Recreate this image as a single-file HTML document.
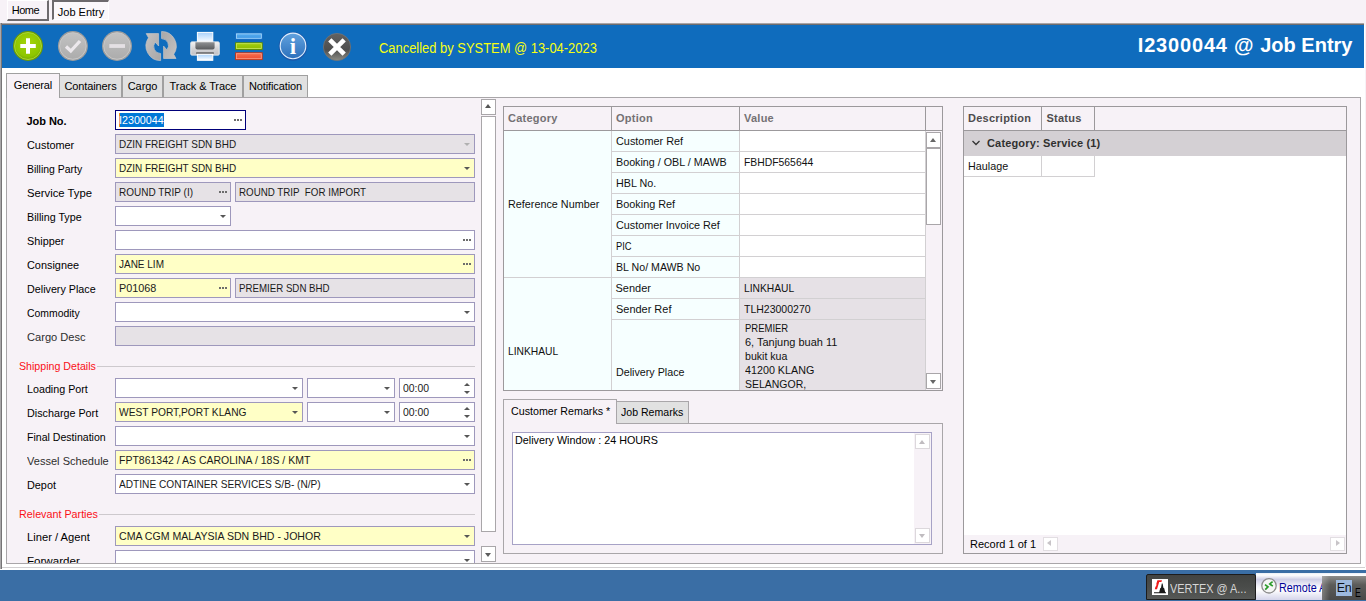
<!DOCTYPE html>
<html>
<head>
<meta charset="utf-8">
<title>Job Entry</title>
<style>
*{box-sizing:border-box;margin:0;padding:0}
html,body{width:1366px;height:601px;overflow:hidden;background:#f7f2f7;font-family:"Liberation Sans",sans-serif;font-size:11px;color:#000}
.a{position:absolute}
#root{position:absolute;left:0;top:0;width:1366px;height:601px;overflow:hidden;background:#f7f2f7}
/* top window tabs */
.wtab{position:absolute;top:0;height:20px;font:11px "Liberation Sans",sans-serif;line-height:19px;text-align:center;color:#000}
/* blue bar */
#bar{position:absolute;left:2px;top:25px;width:1362px;height:43px;background:#0f6cbd}
#status{position:absolute;left:376.7px;top:15.4px;font:14px "Liberation Sans",sans-serif;color:#f6ff12;white-space:pre;transform-origin:0 50%;transform:scaleX(.923)}
#title{position:absolute;right:11.5px;top:8px;font:bold 20px "Liberation Sans",sans-serif;color:#fff;white-space:pre;letter-spacing:0.48px;line-height:24px}
/* main tabs */
.tab{position:absolute;top:75px;height:22px;background:#e1e1e1;border:1px solid #a0a0a0;border-bottom:none;font:11px "Liberation Sans",sans-serif;line-height:21px;text-align:center;letter-spacing:-0.1px;white-space:pre}
.tab.sel{top:73px;height:25px;background:#f7f2f7;line-height:22px;z-index:3}
#panel{position:absolute;left:6px;top:97px;width:1355px;height:467px;border:1px solid #a9a6a9;background:#f7f2f7}
/* form */
.l{position:absolute;left:26.5px;font:11px "Liberation Sans",sans-serif;white-space:pre;line-height:14px;transform-origin:0 50%;transform:scaleX(var(--s,1))}
.i{position:absolute;height:20px;border:1px solid #9e98bc;background:#fff;font:11px "Liberation Sans",sans-serif;line-height:19px;padding-left:2.5px;white-space:pre;overflow:hidden;color:#1a1a1a}
.t{display:inline-block;transform-origin:0 50%;transform:scaleX(var(--s,1));white-space:pre}
.y{background:#ffffc6}
.g{background:#e6e2e6}
.dd:after{content:"";position:absolute;right:4px;top:8px;border:3.5px solid transparent;border-top:3.5px solid #565656;border-bottom:none}
.dd.dis:after{border-top-color:#b0b0b0}
.el:after{content:"";position:absolute;right:3px;top:8px;width:8px;height:2px;background:linear-gradient(90deg,#6c6c6c 0 2px,transparent 2px 3px,#6c6c6c 3px 5px,transparent 5px 6px,#6c6c6c 6px 8px)}
.sp:after{content:"";position:absolute;right:4px;top:3.5px;border:3px solid transparent;border-bottom:3px solid #555;border-top:none}
.sp:before{content:"";position:absolute;right:4px;top:11.5px;border:3px solid transparent;border-top:3px solid #555;border-bottom:none}

/* grids */
.gh{position:absolute;top:107px;height:23px;font:bold 11px "Liberation Sans",sans-serif;letter-spacing:.25px;color:#747174;line-height:23px;padding-left:4px;border-right:1px solid #9c999c;white-space:pre}
.c{position:absolute;font:11px "Liberation Sans",sans-serif;line-height:20px;padding-left:3.5px;white-space:pre;border-right:1px solid #d2d0d2;border-bottom:1px solid #d2d0d2;background:#f6ffff;color:#111}
.c.w{background:#fff}
.c.gr{background:#e6e1e6}
.sb{position:absolute;border:1px solid #a9a6a9;background:#fff}
.sec{position:absolute;left:18.9px;font:11px "Liberation Sans",sans-serif;color:#fa1018;white-space:pre;line-height:14px;transform-origin:0 50%;transform:scaleX(var(--s,1))}
.hr{position:absolute;height:1px;background:#cdc9cd}
</style>
</head>
<body>
<div id="root">
<!-- window outer left border -->
<div class="a" style="left:0;top:23px;width:2px;height:546px;background:linear-gradient(90deg,#aaa8aa 0 1px,#767476 1px);z-index:5"></div>
<div class="a" style="left:0;top:23px;width:1364px;height:2px;background:linear-gradient(#a8a4a6 0 1px,#6e6c6e 1px)"></div>
<!-- window tabs -->
<div class="wtab" style="left:7px;width:42px;height:21px;border:1px solid #fff;border-right:2px solid #6d6a6d;border-bottom:2px solid #6d6a6d;background:#f7f2f7;letter-spacing:-0.5px;text-align:left;padding-left:3.7px">Home</div>
<div class="wtab" style="left:52px;width:57px;border-left:2px solid #6d6a6d;border-top:2px solid #6d6a6d;border-right:1px solid #fff;border-bottom:1px solid #fff;background:#fbf8fb;line-height:16px;padding-top:2px">Job Entry</div>

<div class="a" style="left:2px;top:25px;width:1363px;height:542px;background:#fff"></div>
<div id="bar">
  <div id="status">Cancelled by SYSTEM @ 13-04-2023</div>
  <div id="title"><span style="letter-spacing:.83px">I2300044</span><span style="letter-spacing:.6px"> @ </span><span style="letter-spacing:0">Job Entry</span></div>
</div>


<!-- toolbar icons -->
<svg class="a" style="left:10px;top:28px" width="350" height="38" viewBox="10 28 350 38">
<defs>
<radialGradient id="gg" cx="50%" cy="40%" r="60%"><stop offset="0" stop-color="#a4d40a"/><stop offset="0.8" stop-color="#8ec600"/><stop offset="1" stop-color="#78ac00"/></radialGradient>
<linearGradient id="gy" x1="0" y1="0" x2="0" y2="1"><stop offset="0" stop-color="#c2c2c2"/><stop offset="1" stop-color="#acacac"/></linearGradient>
<linearGradient id="gr" x1="0" y1="0" x2="1" y2="1"><stop offset="0" stop-color="#c4c2c2"/><stop offset="1" stop-color="#a8a6a6"/></linearGradient>
<linearGradient id="gb" x1="0" y1="0" x2="0" y2="1"><stop offset="0" stop-color="#62a2de"/><stop offset="1" stop-color="#2c70bc"/></linearGradient>
<linearGradient id="gd" x1="0" y1="0" x2="0" y2="1"><stop offset="0" stop-color="#626262"/><stop offset="0.6" stop-color="#4e4e4e"/><stop offset="1" stop-color="#8c8c84"/></linearGradient>
<linearGradient id="gp" x1="0" y1="0" x2="0" y2="1"><stop offset="0" stop-color="#a8d2fc"/><stop offset="1" stop-color="#ffffff"/></linearGradient>
<linearGradient id="gpr" x1="0" y1="0" x2="0" y2="1"><stop offset="0" stop-color="#f4f4f4"/><stop offset="0.5" stop-color="#d4d4d6"/><stop offset="1" stop-color="#c0c0c4"/></linearGradient>
<linearGradient id="gsl" x1="0" y1="0" x2="0" y2="1"><stop offset="0" stop-color="#8e9092"/><stop offset="1" stop-color="#5a5c5e"/></linearGradient>
<linearGradient id="b1" x1="0" y1="0" x2="0" y2="1"><stop offset="0" stop-color="#5cb0f0"/><stop offset="1" stop-color="#3a96e4"/></linearGradient>
<linearGradient id="b2" x1="0" y1="0" x2="0" y2="1"><stop offset="0" stop-color="#a4d010"/><stop offset="1" stop-color="#8cbc00"/></linearGradient>
<linearGradient id="b3" x1="0" y1="0" x2="0" y2="1"><stop offset="0" stop-color="#f87050"/><stop offset="1" stop-color="#ec4c30"/></linearGradient>
</defs>
<!-- add -->
<circle cx="28" cy="46" r="15" fill="#6c9c02"/>
<circle cx="28" cy="46" r="13.5" fill="url(#gg)" stroke="#b0d840" stroke-width="0.9"/>
<path d="M20.3 46 H35.8 M28 38.3 V53.8" stroke="#fff" stroke-width="4"/>
<!-- ok -->
<circle cx="72.9" cy="46" r="15" fill="#9e9e9e"/>
<circle cx="72.9" cy="46" r="13.3" fill="url(#gy)" stroke="#c8c8c8" stroke-width="1"/>
<path d="M66 46.5 L70.8 51 L80 41" stroke="#ece8ec" stroke-width="3.3" fill="none"/>
<!-- minus -->
<circle cx="117" cy="46" r="15" fill="#9e9e9e"/>
<circle cx="117" cy="46" r="13.3" fill="url(#gy)" stroke="#c8c8c8" stroke-width="1"/>
<path d="M109.3 46 H125" stroke="#e4e0e4" stroke-width="3.8"/>
<!-- refresh -->
<g fill="url(#gr)" stroke="#c8c6c6" stroke-width="0.7" stroke-linejoin="round">
<path id="ra" d="M160.6 60.6 A14.6 14.6 0 0 1 148.5 37.8 L146.2 33.6 H158.6 V46 L155.3 42.2 A6.9 6.9 0 0 0 160.6 53.5 Z"/>
<path d="M160.6 60.6 A14.6 14.6 0 0 1 148.5 37.8 L146.2 33.6 H158.6 V46 L155.3 42.2 A6.9 6.9 0 0 0 160.6 53.5 Z" transform="rotate(180 161.1 46.05)"/>
</g>
<!-- printer -->
<rect x="197.4" y="32.4" width="15.4" height="10" fill="url(#gp)" stroke="#fff" stroke-width="1"/>
<rect x="190.8" y="41.9" width="28.4" height="13.2" rx="1" fill="url(#gpr)" stroke="#e8e8e8" stroke-width="1"/>
<path d="M195.4 42.3 H214.6 V47.5 Q214.6 49.4 212.6 49.4 H197.4 Q195.4 49.4 195.4 47.5 Z" fill="url(#gsl)"/>
<rect x="196.2" y="52.2" width="17.6" height="1.8" fill="#6a6a6c"/>
<rect x="197.4" y="54.3" width="15.4" height="6" fill="url(#gp)" stroke="#fff" stroke-width="1"/>
<!-- bars -->
<rect x="235.6" y="33" width="26.6" height="6.2" fill="url(#b1)" stroke="#186cc0" stroke-width="1"/>
<rect x="236.5" y="33.9" width="24.8" height="4.4" fill="none" stroke="#a8d8fa" stroke-width="0.8"/>
<rect x="235.6" y="42.8" width="26.6" height="6.6" fill="url(#b2)" stroke="#5e8c00" stroke-width="1"/>
<rect x="236.5" y="43.7" width="24.8" height="4.8" fill="none" stroke="#cce860" stroke-width="0.8"/>
<rect x="235.6" y="52.8" width="26.6" height="6.8" fill="url(#b3)" stroke="#c23418" stroke-width="1"/>
<rect x="236.5" y="53.7" width="24.8" height="5" fill="none" stroke="#fca088" stroke-width="0.8"/>
<!-- info -->
<circle cx="293" cy="46.4" r="14.3" fill="#1a58aa"/>
<circle cx="293" cy="45.9" r="12.8" fill="url(#gb)" stroke="#e0eefc" stroke-width="1.1"/>
<text x="293" y="54.2" font-family="Liberation Serif, serif" font-weight="bold" font-size="23" fill="#fff" text-anchor="middle">i</text>
<!-- close -->
<circle cx="337" cy="47" r="13.6" fill="url(#gd)" stroke="#747474" stroke-width="0.8"/>
<path d="M329.8 39.8 L344.2 54.2 M344.2 39.8 L329.8 54.2" stroke="#fff" stroke-width="4.6"/>
</svg>

<!-- main tabs -->
<div id="panel"></div>
<div class="tab sel" style="left:6px;width:54px">General</div>
<div class="tab" style="left:59px;width:63px">Containers</div>
<div class="tab" style="left:122px;width:41px">Cargo</div>
<div class="tab" style="left:163px;width:80px">Track &amp; Trace</div>
<div class="tab" style="left:243px;width:65px">Notification</div>


<!-- LEFT FORM -->
<div class="a" id="form" style="left:7px;top:98px;width:474px;height:465px;overflow:hidden">
<div class="a" style="left:-7px;top:-98px;width:500px;height:700px">
<div class="l" style="top:114px;font-weight:bold;letter-spacing:-0.05px">Job No.</div>
<div class="i el" style="left:115px;top:110px;width:131px;border-color:#00007a;"><span style="background:#0078d7;color:#fff;display:inline-block;height:14px;line-height:14px;margin-top:2px;vertical-align:top;box-shadow:inset 1px 0 0 #f08a1c;width:45px;margin-left:.5px;overflow:hidden"><span class="t" style="--s:.975">I2300044</span></span></div>
<div class="l" style="top:138px;--s:0.991">Customer</div>
<div class="i g dd dis" style="left:115px;top:134px;width:360px"><span class="t" style="--s:0.905">DZIN FREIGHT SDN BHD</span></div>
<div class="l" style="top:162px;--s:0.949">Billing Party</div>
<div class="i y dd" style="left:115px;top:158px;width:360px"><span class="t" style="--s:0.905">DZIN FREIGHT SDN BHD</span></div>
<div class="l" style="top:186px;--s:1.026">Service Type</div>
<div class="i g el" style="left:115px;top:182px;width:116px"><span class="t" style="--s:0.908">ROUND TRIP (I)</span></div>
<div class="i g" style="left:235px;top:182px;width:240px"><span class="t" style="--s:0.888">ROUND TRIP  FOR IMPORT</span></div>
<div class="l" style="top:210px;--s:0.975">Billing Type</div>
<div class="i dd" style="left:115px;top:206px;width:116px"></div>
<div class="l" style="top:234px;--s:0.986">Shipper</div>
<div class="i el" style="left:115px;top:230px;width:360px"></div>
<div class="l" style="top:258px;--s:0.99">Consignee</div>
<div class="i y el" style="left:115px;top:254px;width:360px"><span class="t" style="--s:0.908">JANE LIM</span></div>
<div class="l" style="top:282px;--s:0.977">Delivery Place</div>
<div class="i y el" style="left:115px;top:278px;width:116px"><span class="t" style="--s:0.985">P01068</span></div>
<div class="i g" style="left:235px;top:278px;width:240px"><span class="t" style="--s:0.882">PREMIER SDN BHD</span></div>
<div class="l" style="top:306px;--s:0.946">Commodity</div>
<div class="i dd" style="left:115px;top:302px;width:360px"></div>
<div class="l" style="top:330px;--s:1.009;color:#2e2e2e">Cargo Desc</div>
<div class="i g" style="left:115px;top:326px;width:360px"></div>

<div class="sec" style="top:359px;--s:0.967">Shipping Details</div>
<div class="hr" style="left:97px;top:366px;width:378px"></div>
<div class="l" style="top:382px;--s:0.975">Loading Port</div>
<div class="i dd" style="left:115px;top:378px;width:188px"></div>
<div class="i dd" style="left:307px;top:378px;width:88px"></div>
<div class="i sp" style="left:399px;top:378px;width:76px"><span class="t" style="--s:0.948">00:00</span></div>
<div class="l" style="top:406px;--s:0.978">Discharge Port</div>
<div class="i y dd" style="left:115px;top:402px;width:188px"><span class="t" style="--s:0.928">WEST PORT,PORT KLANG</span></div>
<div class="i dd" style="left:307px;top:402px;width:88px"></div>
<div class="i sp" style="left:399px;top:402px;width:76px"><span class="t" style="--s:0.948">00:00</span></div>
<div class="l" style="top:430px;--s:0.96">Final Destination</div>
<div class="i dd" style="left:115px;top:426px;width:360px"></div>
<div class="l" style="top:454px;--s:1.005;color:#2e2e2e">Vessel Schedule</div>
<div class="i y el" style="left:115px;top:450px;width:360px"><span class="t" style="--s:0.954">FPT861342 / AS CAROLINA / 18S / KMT</span></div>
<div class="l" style="top:478px;--s:0.986">Depot</div>
<div class="i dd" style="left:115px;top:474px;width:360px"><span class="t" style="--s:0.921">ADTINE CONTAINER SERVICES S/B- (N/P)</span></div>

<div class="sec" style="top:507px;--s:0.977">Relevant Parties</div>
<div class="hr" style="left:99px;top:514px;width:376px"></div>
<div class="l" style="top:530px;--s:1.016">Liner / Agent</div>
<div class="i y dd" style="left:115px;top:526px;width:360px"><span class="t" style="--s:0.961">CMA CGM MALAYSIA SDN BHD - JOHOR</span></div>
<div class="l" style="top:554px;--s:1.053">Forwarder</div>
<div class="i dd" style="left:115px;top:550px;width:360px"></div>
</div>
</div>
<!-- left scrollbar -->
<div class="a" style="left:481px;top:99px;width:15px;height:16px;border:1px solid #a9a6a9;background:#fff"></div>
<div class="a" style="left:485px;top:104px;border:3.5px solid transparent;border-bottom:4px solid #555;border-top:none"></div>
<div class="a" style="left:481px;top:116px;width:15px;height:416px;border:1px solid #a9a6a9;background:#fff"></div>
<div class="a" style="left:481px;top:546px;width:15px;height:16px;border:1px solid #a9a6a9;background:#fff"></div>
<div class="a" style="left:485px;top:553px;border:3.5px solid transparent;border-top:4px solid #5c5c5c;border-bottom:none"></div>


<!-- MIDDLE TABLE -->
<div class="a" style="left:503px;top:106px;width:440px;height:285px;border:1px solid #9c999c;background:#f7f2f7"></div>
<div class="a" style="left:504px;top:130px;width:438px;height:1px;background:#9c999c"></div>
<div class="gh" style="left:504px;width:108px">Category</div>
<div class="gh" style="left:612px;width:128px">Option</div>
<div class="gh" style="left:740px;width:186px">Value</div>
<div class="a" id="mt" style="left:504px;top:131px;width:422px;height:259px;overflow:hidden">
<div class="c" style="left:0;top:0;width:108px;height:147px;line-height:146px"><span class="t" style="--s:0.982">Reference Number</span></div>
<div class="c" style="left:108px;top:0;width:128px;height:21px"><span class="t" style="--s:0.988">Customer Ref</span></div><div class="c w" style="left:236px;top:0;width:186px;height:21px"></div>
<div class="c" style="left:108px;top:21px;width:128px;height:21px"><span class="t" style="--s:0.976">Booking / OBL / MAWB</span></div><div class="c w" style="left:236px;top:21px;width:186px;height:21px"><span class="t" style="--s:0.943">FBHDF565644</span></div>
<div class="c" style="left:108px;top:42px;width:128px;height:21px"><span class="t" style="--s:0.979">HBL No.</span></div><div class="c w" style="left:236px;top:42px;width:186px;height:21px"></div>
<div class="c" style="left:108px;top:63px;width:128px;height:21px"><span class="t" style="--s:0.986">Booking Ref</span></div><div class="c w" style="left:236px;top:63px;width:186px;height:21px"></div>
<div class="c" style="left:108px;top:84px;width:128px;height:21px"><span class="t" style="--s:0.982">Customer Invoice Ref</span></div><div class="c w" style="left:236px;top:84px;width:186px;height:21px"></div>
<div class="c" style="left:108px;top:105px;width:128px;height:21px"><span class="t" style="--s:0.85">PIC</span></div><div class="c w" style="left:236px;top:105px;width:186px;height:21px"></div>
<div class="c" style="left:108px;top:126px;width:128px;height:21px"><span class="t" style="--s:0.966">BL No/ MAWB No</span></div><div class="c w" style="left:236px;top:126px;width:186px;height:21px"></div>
<div class="c" style="left:0;top:147px;width:108px;height:147px;line-height:146px"><span class="t" style="--s:0.933">LINKHAUL</span></div>
<div class="c" style="left:108px;top:147px;width:128px;height:21px"><span class="t" style="--s:1.0">Sender</span></div><div class="c gr" style="left:236px;top:147px;width:186px;height:21px"><span class="t" style="--s:0.933">LINKHAUL</span></div>
<div class="c" style="left:108px;top:168px;width:128px;height:21px"><span class="t" style="--s:0.996">Sender Ref</span></div><div class="c gr" style="left:236px;top:168px;width:186px;height:21px"><span class="t" style="--s:0.955">TLH23000270</span></div>
<div class="c" style="left:108px;top:189px;width:128px;height:105px;line-height:104px"><span class="t" style="--s:0.974">Delivery Place</span></div>
<div class="c gr" style="left:236px;top:189px;width:186px;height:105px;line-height:14px;padding-left:5px;padding-top:1px"><span class="t" style="--s:0.862">PREMIER</span><br><span class="t" style="--s:0.997">6, Tanjung buah 11</span><br><span class="t" style="--s:0.963">bukit kua</span><br><span class="t" style="--s:0.976">41200 KLANG</span><br><span class="t" style="--s:0.952">SELANGOR,</span></div>
</div>
<!-- table scrollbar -->
<div class="sb" style="left:926px;top:132px;width:15px;height:16px"></div>
<div class="a" style="left:930px;top:138px;border:3.5px solid transparent;border-bottom:4px solid #666;border-top:none"></div>
<div class="sb" style="left:926px;top:148px;width:15px;height:77px"></div>
<div class="sb" style="left:926px;top:373px;width:15px;height:16px"></div>
<div class="a" style="left:930px;top:379.5px;border:3.5px solid transparent;border-top:4px solid #666;border-bottom:none"></div>

<!-- REMARKS -->
<div class="a" style="left:503px;top:423px;width:440px;height:131px;border:1px solid #a9a6a9;background:#f7f2f7"></div>
<div class="a" style="left:503px;top:399px;width:114px;height:25px;border:1px solid #a9a6a9;border-bottom:none;background:#f7f2f7;font:11px 'Liberation Sans',sans-serif;line-height:22px;padding-left:7px;white-space:pre"><span class="t" style="--s:.972">Customer Remarks *</span></div>
<div class="a" style="left:616px;top:401px;width:73px;height:22px;border:1px solid #a9a6a9;border-bottom:none;background:#e1e1e1;font:11px 'Liberation Sans',sans-serif;line-height:21px;padding-left:4px;white-space:pre"><span class="t" style="--s:.96">Job Remarks</span></div>
<div class="a" style="left:512px;top:432px;width:420px;height:113px;border:1px solid #a7a2c6;background:#fff;font:11px 'Liberation Sans',sans-serif;line-height:14px;padding:0 2.4px;white-space:pre"><span class="t" style="--s:.979">Delivery Window : 24 HOURS</span></div>
<div class="a" style="left:914px;top:433px;width:17px;height:111px;background:#f7f2f7"></div>
<div class="a" style="left:915px;top:434px;width:15px;height:15px;border:1px solid #dcd8dc;background:#fff"></div>
<div class="a" style="left:919px;top:439.5px;border:3.5px solid transparent;border-bottom:4px solid #c0bcc0;border-top:none"></div>
<div class="a" style="left:915px;top:528px;width:15px;height:15px;border:1px solid #dcd8dc;background:#fff"></div>
<div class="a" style="left:919px;top:534px;border:3.5px solid transparent;border-top:4px solid #c0bcc0;border-bottom:none"></div>

<!-- RIGHT GRID -->
<div class="a" style="left:963px;top:106px;width:384px;height:448px;border:1px solid #9c999c;background:#fff"></div>
<div class="a" style="left:964px;top:107px;width:382px;height:23px;background:#f7f2f7"></div>
<div class="a" style="left:964px;top:130px;width:382px;height:1px;background:#9c999c"></div>
<div class="gh" style="left:964px;width:78px;color:#4e4c4e">Description</div>
<div class="gh" style="left:1042px;width:53px;padding-left:4.5px;color:#4e4c4e">Status</div>
<div class="a" style="left:964px;top:131px;width:382px;height:25px;background:#d4d0d4;font:bold 11px 'Liberation Sans',sans-serif;line-height:24px;padding-left:23px;white-space:pre;color:#303030;letter-spacing:.16px">Category: Service (1)</div>
<svg class="a" style="left:971px;top:139px" width="10" height="8" viewBox="0 0 10 8"><path d="M1.5 2 L5 5.5 L8.5 2" fill="none" stroke="#333" stroke-width="1.3"/></svg>
<div class="c w" style="left:964px;top:156px;width:78px;height:21px"><span class="t" style="--s:0.979">Haulage</span></div>
<div class="c w" style="left:1042px;top:156px;width:53px;height:21px"></div>
<div class="a" style="left:964px;top:535px;width:382px;height:18px;background:#f7f2f7;font:11px 'Liberation Sans',sans-serif;line-height:18px;padding-left:6px;white-space:pre">Record 1 of 1</div>
<div class="a" style="left:1043px;top:537px;width:15px;height:14px;border:1px solid #e2dee2;background:#fff"></div>
<div class="a" style="left:1047px;top:540px;border:3.5px solid transparent;border-right:4px solid #c8c4c8;border-left:none"></div>
<div class="a" style="left:1330px;top:537px;width:15px;height:14px;border:1px solid #e2dee2;background:#fff"></div>
<div class="a" style="left:1336px;top:540px;border:3.5px solid transparent;border-left:4px solid #c8c4c8;border-right:none"></div>

<!-- taskbar -->
<div class="a" style="left:0;top:567px;width:1366px;height:3px;background:#fff"></div>
<div class="a" style="left:2px;top:567px;width:1363px;height:1px;background:#d2d0d2"></div>
<div class="a" style="left:0;top:570px;width:1366px;height:31px;background:#3a6ea5"></div>

<div class="a" style="left:1256px;top:573px;width:110px;height:4px;background:linear-gradient(#e8eef6,#fff 50%)"></div>
<div class="a" style="left:1146px;top:574px;width:110px;height:26px;background:linear-gradient(#424442,#4a4c4a 50%,#565856);border:1px solid #1c1c1c;border-radius:2px 2px 0 0"></div>
<div class="a" style="left:1152px;top:579px;width:16px;height:16px;background:#fff"></div>
<svg class="a" style="left:1152px;top:579px" width="16" height="16" viewBox="0 0 16 16"><path d="M5.4 1.2 H10 L9.4 3 H7.2 L5 10.2 H2.8 L3.5 7.6 H4 L4.6 5.2 H4.2 Z" fill="#f01818"/><path d="M2 13.2 H7.2 L8.2 9.2 L9 8.8 L9.8 4.6 L10.6 4.6 L11.4 8.8 L12.2 9.2 L13.2 13.2 H14 V14.2 H2 Z" fill="#1a1a1a"/></svg>
<div class="a" style="left:1170px;top:579.7px;font:13px 'Liberation Sans',sans-serif;color:#d6d6d6;line-height:18px;white-space:pre;transform-origin:0 50%;transform:scaleX(.84)">VERTEX @ A...</div>
<div class="a" style="left:1256px;top:575px;width:67px;height:25px;background:linear-gradient(#fff 0,#cfcfe6 18%,#f4f4fa 45%,#fff 60%,#d4d4ea 100%)"></div>
<svg class="a" style="left:1260px;top:577px" width="18" height="18" viewBox="0 0 18 18"><circle cx="9" cy="8.8" r="7.2" fill="#f6f6f6" stroke="#8c8c8c" stroke-width="1.3"/><path d="M5 7.6 L8 9.9 L5.2 12.6" fill="none" stroke="#2c9c2c" stroke-width="1.7"/><path d="M12.6 4.6 L9.8 6.9 L12.8 9.2" fill="none" stroke="#2c9c2c" stroke-width="1.7"/></svg>
<div class="a" style="left:1279px;top:578.6px;width:44px;height:20px;overflow:hidden"><div class="a" style="left:0;top:0;font:12.5px 'Liberation Sans',sans-serif;color:#000096;line-height:18px;white-space:pre;transform-origin:0 50%;transform:scaleX(.86)">Remote A</div></div>
<div class="a" style="left:1322px;top:576px;width:44px;height:25px;background:linear-gradient(#8c8c8a,#5c5c5a 35%,#484848)"></div>
<div class="a" style="left:1322px;top:576px;width:8px;height:25px;background:linear-gradient(90deg,rgba(255,255,255,.25),rgba(255,255,255,0))"></div>
<div class="a" style="left:1336px;top:580px;width:16px;height:16px;background:#9db9de;font:12.5px 'Liberation Sans',sans-serif;color:#0c1016;line-height:16px;text-align:center;letter-spacing:-0.5px">En</div>
<div class="a" style="left:1354.5px;top:587px;font:12px 'Liberation Sans',sans-serif;color:#000;line-height:13px;transform-origin:0 50%;transform:scaleX(.72)">E</div>
<div class="a" style="left:1256px;top:600px;width:110px;height:1px;background:#3a6ea5"></div>
</div>
</body>
</html>
